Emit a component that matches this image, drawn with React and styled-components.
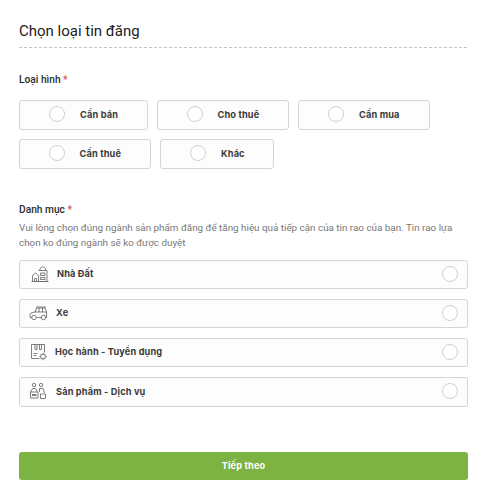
import React from "react";
import styled, { createGlobalStyle } from "styled-components";

const GlobalStyle = createGlobalStyle`
  html, body {
    margin: 0;
    padding: 0;
    background: #fff;
    font-family: Roboto, "Liberation Sans", sans-serif;
  }
`;

const Page = styled.div`
  width: 480px;
  height: 488px;
  box-sizing: border-box;
  padding: 20px 13px 0 19px;
  overflow: hidden;
`;

const Title = styled.h1`
  box-sizing: content-box;
  margin: 0;
  height: 26px;
  padding-top: 1px;
  border-bottom: 1px dashed #c4c4c4;
  font-size: 15px;
  line-height: 21px;
  font-weight: 400;
  color: #1c1c1c;
`;

const Label = styled.div`
  font-size: 10.2px;
  line-height: 14px;
  font-weight: 500;
  color: #2c2c2c;
  margin-top: ${(p) => p.$top}px;
`;

const Star = styled.span`
  color: #d9534f;
`;

const TypeRow = styled.div`
  display: flex;
  gap: 9px;
  margin-top: ${(p) => p.$top}px;
  margin-left: ${(p) => p.$left || 0}px;
`;

const TypeOption = styled.div`
  box-sizing: border-box;
  width: ${(p) => p.$width}px;
  height: 29.5px;
  display: flex;
  align-items: center;
  padding: 0 0 1px 29px;
  background: #fdfdfd;
  border: 1px solid #d4d4d4;
  border-radius: 3px;
`;

const Radio = styled.span`
  box-sizing: border-box;
  flex: none;
  width: 16px;
  height: 16px;
  border-radius: 50%;
  border: 1px solid #cfcfcf;
  background: #fff;
`;

const OptionText = styled.span`
  font-family: Inter, "Open Sans", sans-serif;
  font-size: 9.2px;
  font-weight: 700;
  letter-spacing: 0.15px;
  color: #3a3a3a;
  white-space: nowrap;
`;

const TypeText = styled(OptionText)`
  margin-left: 15px;
`;

const Hint = styled.p`
  margin: 3px 0 0;
  width: 448px;
  font-size: 9.85px;
  line-height: 15.5px;
  color: #777;
`;

const CategoryList = styled.div`
  display: flex;
  flex-direction: column;
  gap: 10px;
  margin-top: 9px;
  width: 449px;
`;

const CategoryRow = styled.div`
  box-sizing: border-box;
  height: ${(p) => p.$height}px;
  display: flex;
  align-items: center;
  padding: 0 9px 1px ${(p) => p.$left}px;
  background: #fdfdfd;
  border: 1px solid #d4d4d4;
  border-radius: 3px;
`;

const CategoryText = styled(OptionText)`
  margin-left: ${(p) => p.$gap}px;
  flex: 1;
`;

const IconSvg = styled.svg`
  flex: none;
  width: 18px;
  height: 18px;
  fill: none;
  stroke: #5f5f5f;
  stroke-width: 0.8;
`;

const NextButton = styled.button`
  display: block;
  width: 449px;
  height: 28px;
  margin-top: 45px;
  padding: 0 0 1px;
  border: none;
  border-radius: 3px;
  background: #7cb342;
  color: #fff;
  font-family: Inter, "Open Sans", sans-serif;
  font-size: 9.2px;
  font-weight: 700;
  letter-spacing: 0.15px;
`;

const HouseIcon = () => (
  <IconSvg viewBox="0 0 18 18">
    <path d="M0.5 16.5h17" />
    <path d="M1.5 16.5V10.5L4.5 8l3 2.5v6" />
    <path d="M3.5 16.5v-3h2v3" />
    <path d="M7.5 5.5h8.5v11H7.5" />
    <path d="M9 5.5V3.5L11.7 1.5l2.8 2v2" />
    <path d="M9.5 8h4.5v2.5H9.5zM9.5 12.5h4.5v2H9.5z" />
  </IconSvg>
);

const CarIcon = () => (
  <IconSvg viewBox="0 0 18 18">
    <path d="M7 3h10" />
    <path d="M3 13.5H1V10.5L2 9 6 8 7.5 4h8.5L17.5 8v5.5h-1" />
    <path d="M7.5 13.5h5.5" />
    <path d="M6 8h11.5M10 4v4M13.5 4v4" />
    <circle cx="5" cy="13.5" r="2.2" />
    <circle cx="14.5" cy="13.5" r="2.2" />
  </IconSvg>
);

const SchoolIcon = () => (
  <IconSvg viewBox="0 0 18 18">
    <path d="M9.5 15.5H1.5V1.5h13V9.5" />
    <path d="M5 1.5v5h2v-5M9.5 1.5v5h2v-5" />
    <path d="M3.5 10.5h4M3.5 12.5h3" />
    <circle cx="13" cy="13.5" r="2.4" />
    <path d="M13 9.7v1.4M13 15.9v1.4M9.2 13.5h1.4M15.4 13.5h1.4M10.4 10.9l1 1M14.6 15.1l1 1M15.6 10.9l-1 1M11.4 15.1l-1 1" />
  </IconSvg>
);

const ServiceIcon = () => (
  <IconSvg viewBox="0 0 18 18">
    <circle cx="5" cy="3" r="1.7" />
    <circle cx="12" cy="3" r="1.7" />
    <path d="M1.5 10 3.5 6.5h3L8.5 10" />
    <path d="M1.5 10h7.5v6H1.5z" />
    <path d="M3 13h4.5" strokeWidth="1.6" />
    <path d="M10.5 10V6.5h3.5L15.5 11" />
    <path d="M11.5 12h5v4.5h-5z" />
  </IconSvg>
);

const firstRow = [
  { name: "Cần bán", width: 128.5 },
  { name: "Cho thuê", width: 132.5 },
  { name: "Cần mua", width: 131.5 }
];

const secondRow = [
  { name: "Cần thuê", width: 132.5 },
  { name: "Khác", width: 113.5 }
];

const categories = [
  { name: "Nhà Đất", Icon: HouseIcon, left: 11, gap: 8, height: 29 },
  { name: "Xe", Icon: CarIcon, left: 9, gap: 9, height: 29 },
  { name: "Học hành - Tuyển dụng", Icon: SchoolIcon, left: 10, gap: 7, height: 29.5 },
  { name: "Sản phẩm - Dịch vụ", Icon: ServiceIcon, left: 9, gap: 9, height: 29.5 }
];

const App = () => (
  <Page>
    <GlobalStyle />
    <Title>Chọn loại tin đăng</Title>
    <Label $top={25}>
      Loại hình <Star>*</Star>
    </Label>
    <TypeRow $top={13}>
      {firstRow.map((item) => (
        <TypeOption key={item.name} $width={item.width}>
          <Radio />
          <TypeText>{item.name}</TypeText>
        </TypeOption>
      ))}
    </TypeRow>
    <TypeRow $top={9.5} $left={-0.5}>
      {secondRow.map((item) => (
        <TypeOption key={item.name} $width={item.width}>
          <Radio />
          <TypeText>{item.name}</TypeText>
        </TypeOption>
      ))}
    </TypeRow>
    <Label $top={34}>
      Danh mục <Star>*</Star>
    </Label>
    <Hint>
      Vui lòng chọn đúng ngành sản phẩm đăng để tăng hiệu quả tiếp cận của tin
      rao của bạn. Tin rao lựa chọn ko đúng ngành sẽ ko được duyệt
    </Hint>
    <CategoryList>
      {categories.map(({ name, Icon, left, gap, height }) => (
        <CategoryRow key={name} $left={left} $height={height}>
          <Icon />
          <CategoryText $gap={gap}>{name}</CategoryText>
          <Radio />
        </CategoryRow>
      ))}
    </CategoryList>
    <NextButton>Tiếp theo</NextButton>
  </Page>
);

export default App;
